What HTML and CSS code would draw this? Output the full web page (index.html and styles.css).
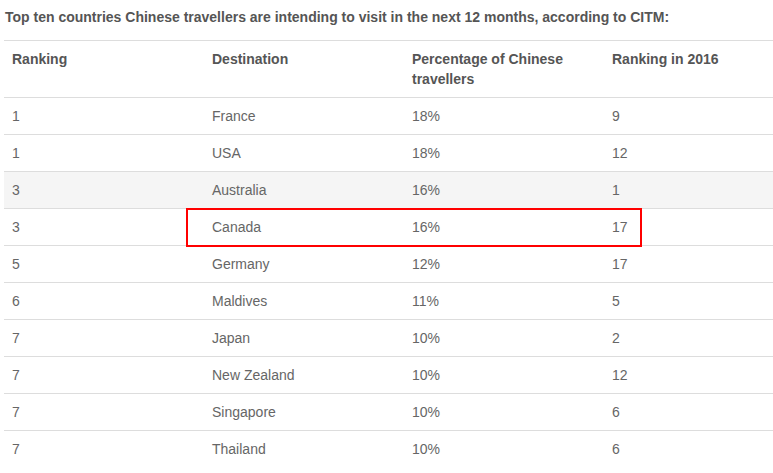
FILE: index.html
```html
<!DOCTYPE html>
<html>
<head>
<meta charset="utf-8">
<link rel="stylesheet" href="styles.css">
</head>
<body>
<div class="page">
  <p class="title">Top ten countries Chinese travellers are intending to visit in the next 12 months, according to CITM:</p>
  <div class="table-wrap">
    <table class="rank-table">
      <colgroup>
        <col class="c1"><col class="c2"><col class="c3"><col class="c4">
      </colgroup>
      <thead>
        <tr><th>Ranking</th><th>Destination</th><th>Percentage of Chinese<br>travellers</th><th>Ranking in 2016</th></tr>
      </thead>
      <tbody>
        <tr><td>1</td><td>France</td><td>18%</td><td>9</td></tr>
        <tr><td>1</td><td>USA</td><td>18%</td><td>12</td></tr>
        <tr class="shaded"><td>3</td><td>Australia</td><td>16%</td><td>1</td></tr>
        <tr><td>3</td><td>Canada</td><td>16%</td><td>17</td></tr>
        <tr><td>5</td><td>Germany</td><td>12%</td><td>17</td></tr>
        <tr><td>6</td><td>Maldives</td><td>11%</td><td>5</td></tr>
        <tr><td>7</td><td>Japan</td><td>10%</td><td>2</td></tr>
        <tr><td>7</td><td>New Zealand</td><td>10%</td><td>12</td></tr>
        <tr><td>7</td><td>Singapore</td><td>10%</td><td>6</td></tr>
        <tr><td>7</td><td>Thailand</td><td>10%</td><td>6</td></tr>
      </tbody>
    </table>
    <div class="highlight"></div>
  </div>
</div>
</body>
</html>
```
FILE: styles.css
```css
html, body {
  margin: 0;
  padding: 0;
  background: #fff;
}
.page {
  padding: 7px 0 0 4px;
  font-family: "Liberation Sans", Arial, sans-serif;
  font-size: 14px;
  line-height: 20px;
  color: #666;
}
.title {
  margin: 0 0 13px 1px;
  font-weight: bold;
  color: #555;
}
.table-wrap {
  position: relative;
}
.rank-table {
  width: 769px;
  border-collapse: collapse;
  border-top: 1px solid #ddd;
}
.c1, .c2, .c3 { width: 200px; }
.rank-table th,
.rank-table td {
  text-align: left;
  vertical-align: top;
  padding: 8px;
  border-bottom: 1px solid #ddd;
}
.rank-table th {
  font-weight: bold;
  color: #555;
}
.rank-table tbody tr:last-child td {
  border-bottom: none;
}
.rank-table .shaded td {
  background: #f5f5f5;
}
.highlight {
  position: absolute;
  left: 182px;
  top: 168px;
  width: 452px;
  height: 35px;
  border: 2px solid #f00;
}
```
